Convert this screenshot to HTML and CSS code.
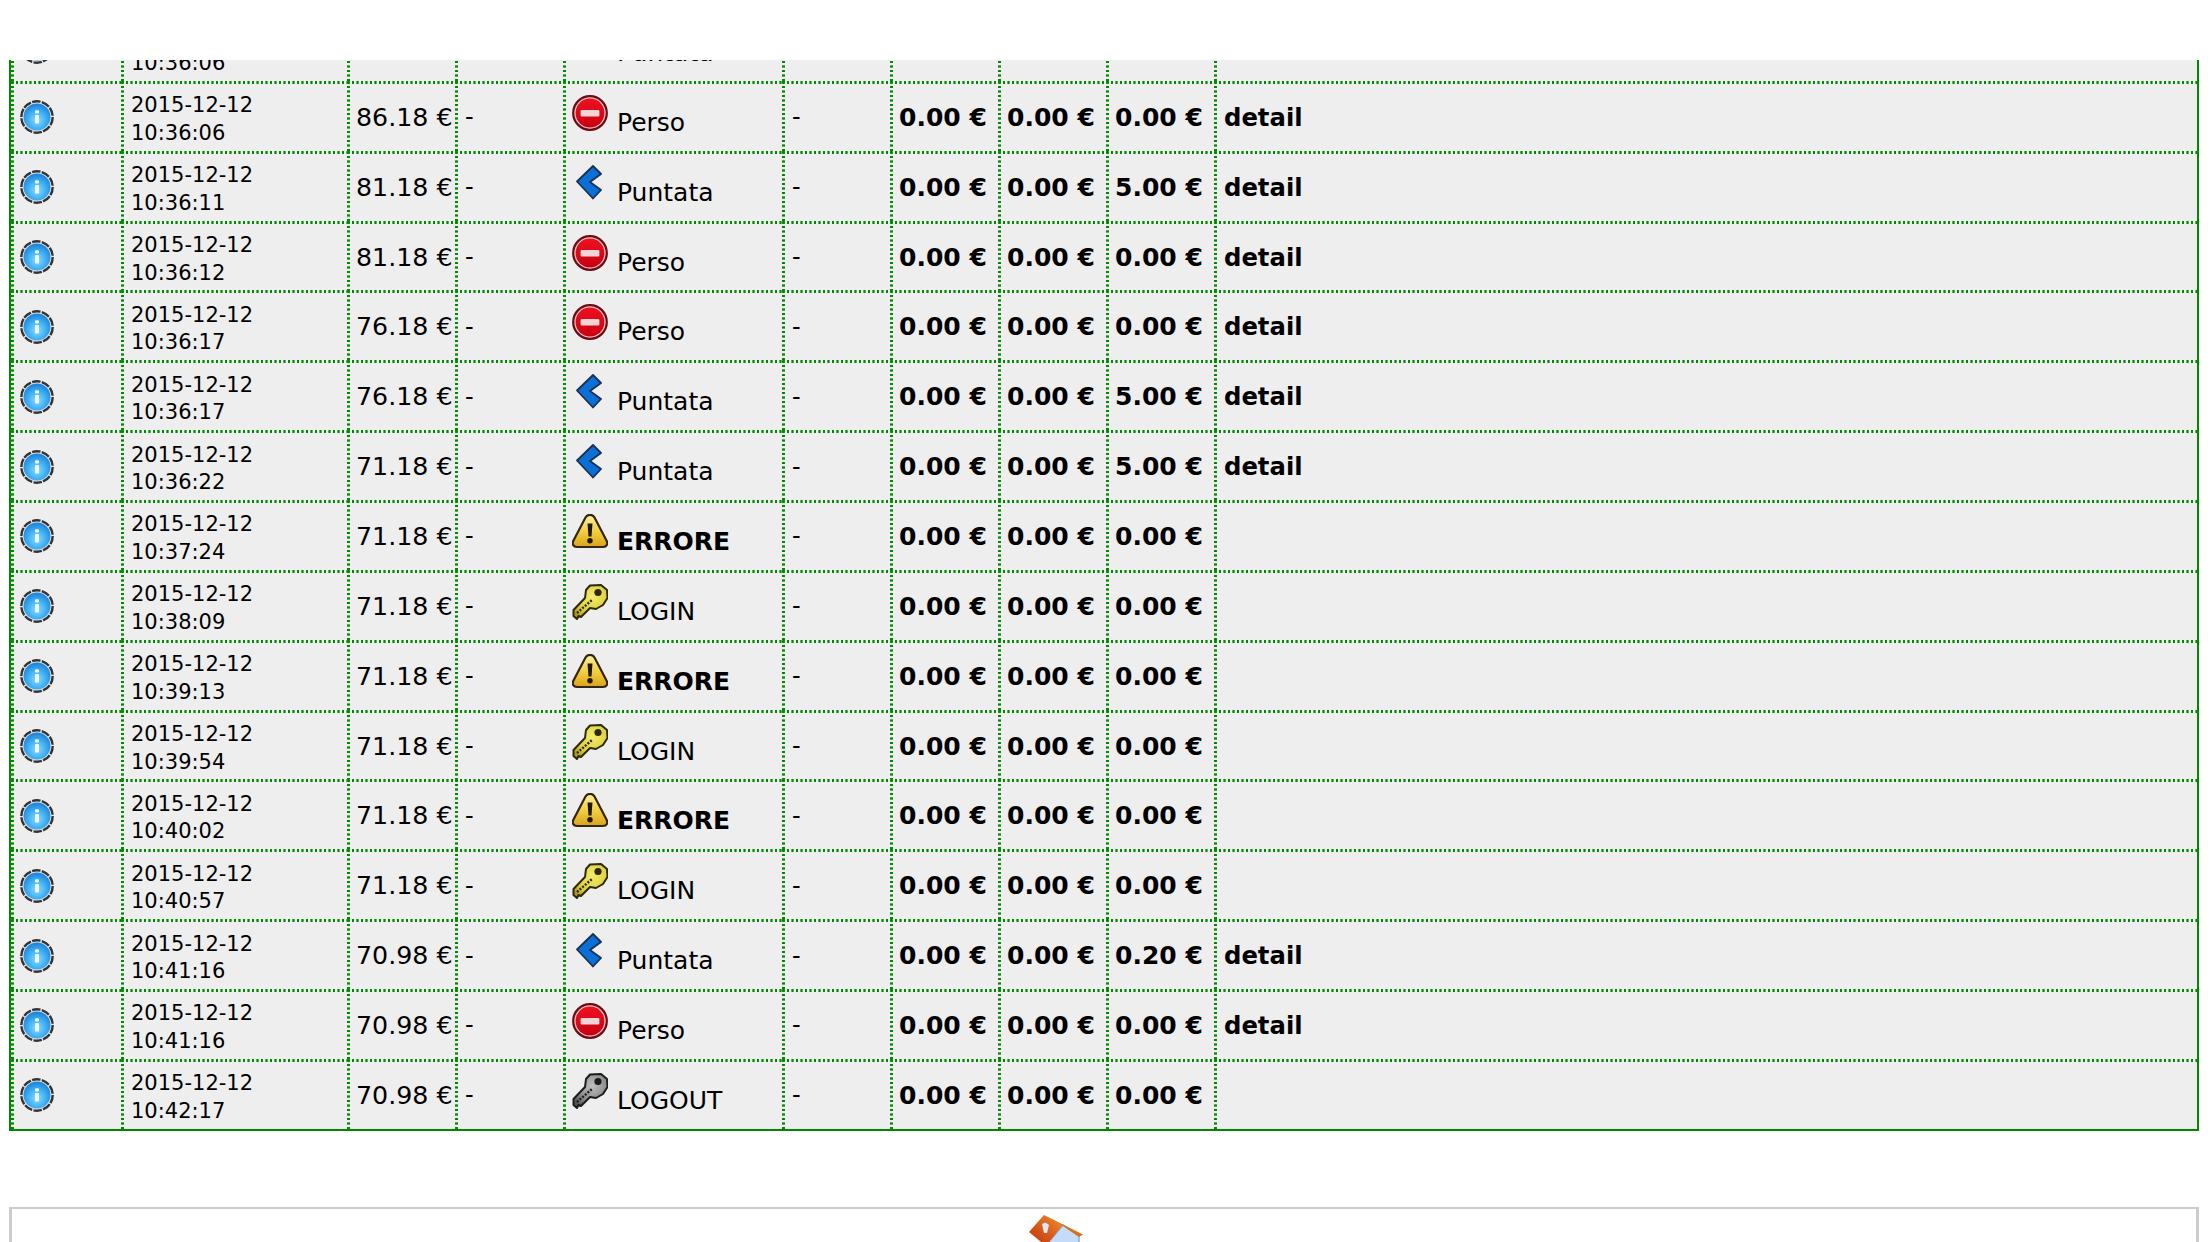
FILE: index.html
```html
<!DOCTYPE html>
<html lang="it">
<head>
<meta charset="utf-8">
<title>Storico</title>
<link rel="stylesheet" href="styles.css">
</head>
<body>
<svg class="sprite" width="0" height="0" aria-hidden="true">
  <defs>
    <radialGradient id="g-info" cx="50%" cy="62%" r="58%">
      <stop offset="0" stop-color="#8edcff"/><stop offset=".55" stop-color="#42b2f4"/><stop offset="1" stop-color="#1f86dc"/>
    </radialGradient>
    <linearGradient id="g-stop" x1="0" y1="0" x2="0" y2="1">
      <stop offset="0" stop-color="#f01020"/><stop offset="1" stop-color="#c80010"/>
    </linearGradient>
    <linearGradient id="g-warn" x1="0" y1="0" x2="0" y2="1">
      <stop offset="0" stop-color="#fdf0a0"/><stop offset=".55" stop-color="#f2cc3c"/><stop offset="1" stop-color="#d8a21c"/>
    </linearGradient>
    <linearGradient id="g-roof" x1="0" y1="1" x2="1" y2="0">
      <stop offset="0" stop-color="#c02c08"/><stop offset="1" stop-color="#f29030"/>
    </linearGradient>
    <radialGradient id="g-key-gold" cx="55%" cy="35%" r="70%">
      <stop offset="0" stop-color="#f4ec6c"/><stop offset=".65" stop-color="#dcd03c"/><stop offset="1" stop-color="#a89818"/>
    </radialGradient>
    <radialGradient id="g-key-grey" cx="55%" cy="35%" r="70%">
      <stop offset="0" stop-color="#c0c0c0"/><stop offset=".65" stop-color="#888"/><stop offset="1" stop-color="#505050"/>
    </radialGradient>
    <symbol id="i-info" viewBox="0 0 34 34">
      <circle cx="17" cy="17" r="15.700" fill="#dfe6ec" stroke="#333" stroke-width="2.400" stroke-dasharray="8.500 1.300"/>
      <circle cx="17" cy="17" r="13.500" fill="url(#g-info)"/>
      <rect x="15" y="10.300" width="4" height="3.200" rx="1.200" fill="#eef8ff"/>
      <rect x="15" y="15" width="4" height="8.500" rx=".8" fill="#eef8ff"/>
    </symbol>
    <symbol id="i-stop" viewBox="0 0 36 36">
      <circle cx="18" cy="18" r="16.800" fill="#ecc4c4" stroke="#6e0a12" stroke-width="2.200"/>
      <circle cx="18" cy="18" r="14.400" fill="url(#g-stop)"/>
      <rect x="8.600" y="15" width="18.800" height="6.400" rx="1" fill="#f4d4d4"/>
    </symbol>
    <symbol id="i-back" viewBox="0 0 36 36">
      <path d="M5 16.500 21 1l8 8-11 8 11 8-8 8.500z" fill="#0a70d8" stroke="#1c3050" stroke-width="1.800" stroke-linejoin="round"/>
    </symbol>
    <symbol id="i-warn" viewBox="0 0 36 36">
      <path d="M13.500 3.500c2-3.500 7-3.500 9 0l12 23c1.800 3.500.3 6.500-3.500 6.500H5c-3.800 0-5.300-3-3.500-6.500z" fill="url(#g-warn)" stroke="#33260c" stroke-width="2.200"/>
      <path d="M15.500 9.500h5l-1 13h-3z" fill="#1e1606"/>
      <circle cx="18" cy="26.800" r="2.700" fill="#1e1606"/>
    </symbol>
    <symbol id="i-key" viewBox="0 0 36 36">
      <path d="M13 14 14 6 18 1.500 29 1l6 5 .5 8-4.500 7-7 4-6-1-9 9-2.500-1L5 35l-3.500-3v-6z" fill="var(--key-fill)" stroke="var(--key-line)" stroke-width="2" stroke-linejoin="round"/>
      <path d="M5 29 20 16" stroke="var(--key-line)" stroke-width="2.400" stroke-dasharray="2 1.500" fill="none"/>
      <circle cx="26" cy="8.500" r="3.600" fill="var(--key-line)"/>
    </symbol>
    <symbol id="i-home" viewBox="0 0 56 52">
      <path d="M17 30 34 10 50 21V52H17z" fill="#c4dcfa" stroke="#8cacdc" stroke-width="1.500"/>
      <path d="M15 0 54 19.500 50 22 34 11z" fill="#d8701c"/>
      <path d="M0 17 15 0 34 10 17 31z" fill="url(#g-roof)"/>
      <path d="M13 9l3.500-1.500L20 10l-2 8h-3z" fill="#dce8f8"/>
    </symbol>
  </defs>
</svg>

<header class="top-bar"></header>

<main class="page">
  <table class="log">
    <colgroup>
      <col class="c-icon"><col class="c-date"><col class="c-num"><col class="c-num">
      <col class="c-label"><col class="c-num"><col class="c-num"><col class="c-num"><col class="c-num"><col>
    </colgroup>
    <tbody>
      <tr>
        <td><svg class="ico-info"><use href="#i-info"/></svg></td><td class="date">2015-12-12<br>10:36:06</td><td class="amt">86.18 €</td><td>-</td>
        <td class="label"><svg class="ico"><use href="#i-back"/></svg> Puntata</td><td>-</td>
        <td class="b">0.00 €</td><td class="b">0.00 €</td><td class="b">5.00 €</td><td class="link">detail</td>
      </tr>
      <tr>
        <td><svg class="ico-info"><use href="#i-info"/></svg></td><td class="date">2015-12-12<br>10:36:06</td><td class="amt">86.18 €</td><td>-</td>
        <td class="label"><svg class="ico"><use href="#i-stop"/></svg> Perso</td><td>-</td>
        <td class="b">0.00 €</td><td class="b">0.00 €</td><td class="b">0.00 €</td><td class="link">detail</td>
      </tr>
      <tr>
        <td><svg class="ico-info"><use href="#i-info"/></svg></td><td class="date">2015-12-12<br>10:36:11</td><td class="amt">81.18 €</td><td>-</td>
        <td class="label"><svg class="ico"><use href="#i-back"/></svg> Puntata</td><td>-</td>
        <td class="b">0.00 €</td><td class="b">0.00 €</td><td class="b">5.00 €</td><td class="link">detail</td>
      </tr>
      <tr>
        <td><svg class="ico-info"><use href="#i-info"/></svg></td><td class="date">2015-12-12<br>10:36:12</td><td class="amt">81.18 €</td><td>-</td>
        <td class="label"><svg class="ico"><use href="#i-stop"/></svg> Perso</td><td>-</td>
        <td class="b">0.00 €</td><td class="b">0.00 €</td><td class="b">0.00 €</td><td class="link">detail</td>
      </tr>
      <tr>
        <td><svg class="ico-info"><use href="#i-info"/></svg></td><td class="date">2015-12-12<br>10:36:17</td><td class="amt">76.18 €</td><td>-</td>
        <td class="label"><svg class="ico"><use href="#i-stop"/></svg> Perso</td><td>-</td>
        <td class="b">0.00 €</td><td class="b">0.00 €</td><td class="b">0.00 €</td><td class="link">detail</td>
      </tr>
      <tr>
        <td><svg class="ico-info"><use href="#i-info"/></svg></td><td class="date">2015-12-12<br>10:36:17</td><td class="amt">76.18 €</td><td>-</td>
        <td class="label"><svg class="ico"><use href="#i-back"/></svg> Puntata</td><td>-</td>
        <td class="b">0.00 €</td><td class="b">0.00 €</td><td class="b">5.00 €</td><td class="link">detail</td>
      </tr>
      <tr>
        <td><svg class="ico-info"><use href="#i-info"/></svg></td><td class="date">2015-12-12<br>10:36:22</td><td class="amt">71.18 €</td><td>-</td>
        <td class="label"><svg class="ico"><use href="#i-back"/></svg> Puntata</td><td>-</td>
        <td class="b">0.00 €</td><td class="b">0.00 €</td><td class="b">5.00 €</td><td class="link">detail</td>
      </tr>
      <tr>
        <td><svg class="ico-info"><use href="#i-info"/></svg></td><td class="date">2015-12-12<br>10:37:24</td><td class="amt">71.18 €</td><td>-</td>
        <td class="label"><svg class="ico"><use href="#i-warn"/></svg> <strong>ERRORE</strong></td><td>-</td>
        <td class="b">0.00 €</td><td class="b">0.00 €</td><td class="b">0.00 €</td><td></td>
      </tr>
      <tr>
        <td><svg class="ico-info"><use href="#i-info"/></svg></td><td class="date">2015-12-12<br>10:38:09</td><td class="amt">71.18 €</td><td>-</td>
        <td class="label"><svg class="ico key-gold"><use href="#i-key"/></svg> LOGIN</td><td>-</td>
        <td class="b">0.00 €</td><td class="b">0.00 €</td><td class="b">0.00 €</td><td></td>
      </tr>
      <tr>
        <td><svg class="ico-info"><use href="#i-info"/></svg></td><td class="date">2015-12-12<br>10:39:13</td><td class="amt">71.18 €</td><td>-</td>
        <td class="label"><svg class="ico"><use href="#i-warn"/></svg> <strong>ERRORE</strong></td><td>-</td>
        <td class="b">0.00 €</td><td class="b">0.00 €</td><td class="b">0.00 €</td><td></td>
      </tr>
      <tr>
        <td><svg class="ico-info"><use href="#i-info"/></svg></td><td class="date">2015-12-12<br>10:39:54</td><td class="amt">71.18 €</td><td>-</td>
        <td class="label"><svg class="ico key-gold"><use href="#i-key"/></svg> LOGIN</td><td>-</td>
        <td class="b">0.00 €</td><td class="b">0.00 €</td><td class="b">0.00 €</td><td></td>
      </tr>
      <tr>
        <td><svg class="ico-info"><use href="#i-info"/></svg></td><td class="date">2015-12-12<br>10:40:02</td><td class="amt">71.18 €</td><td>-</td>
        <td class="label"><svg class="ico"><use href="#i-warn"/></svg> <strong>ERRORE</strong></td><td>-</td>
        <td class="b">0.00 €</td><td class="b">0.00 €</td><td class="b">0.00 €</td><td></td>
      </tr>
      <tr>
        <td><svg class="ico-info"><use href="#i-info"/></svg></td><td class="date">2015-12-12<br>10:40:57</td><td class="amt">71.18 €</td><td>-</td>
        <td class="label"><svg class="ico key-gold"><use href="#i-key"/></svg> LOGIN</td><td>-</td>
        <td class="b">0.00 €</td><td class="b">0.00 €</td><td class="b">0.00 €</td><td></td>
      </tr>
      <tr>
        <td><svg class="ico-info"><use href="#i-info"/></svg></td><td class="date">2015-12-12<br>10:41:16</td><td class="amt">70.98 €</td><td>-</td>
        <td class="label"><svg class="ico"><use href="#i-back"/></svg> Puntata</td><td>-</td>
        <td class="b">0.00 €</td><td class="b">0.00 €</td><td class="b">0.20 €</td><td class="link">detail</td>
      </tr>
      <tr>
        <td><svg class="ico-info"><use href="#i-info"/></svg></td><td class="date">2015-12-12<br>10:41:16</td><td class="amt">70.98 €</td><td>-</td>
        <td class="label"><svg class="ico"><use href="#i-stop"/></svg> Perso</td><td>-</td>
        <td class="b">0.00 €</td><td class="b">0.00 €</td><td class="b">0.00 €</td><td class="link">detail</td>
      </tr>
      <tr>
        <td><svg class="ico-info"><use href="#i-info"/></svg></td><td class="date">2015-12-12<br>10:42:17</td><td class="amt">70.98 €</td><td>-</td>
        <td class="label"><svg class="ico key-grey"><use href="#i-key"/></svg> LOGOUT</td><td>-</td>
        <td class="b">0.00 €</td><td class="b">0.00 €</td><td class="b">0.00 €</td><td></td>
      </tr>
    </tbody>
  </table>

  <section class="footer-box">
    <svg class="ico-home"><use href="#i-home"/></svg>
  </section>
</main>
</body>
</html>
```

FILE: styles.css
```css
html, body {
  margin: 0;
  padding: 0;
  height: 1242px;
  overflow: hidden;
  background: #fff;
}

.sprite {
  position: absolute;
}

.top-bar {
  position: absolute;
  top: 0;
  left: 0;
  right: 0;
  height: 60px;
  background: #fff;
  z-index: 2;
}

.page {
  height: 1233px;
  overflow: hidden;
  padding: 9px 9px 0;
  font-family: "DejaVu Sans", Verdana, sans-serif;
  color: #000;
}

.log {
  width: 2190px;
  table-layout: fixed;
  border-collapse: separate;
  border-spacing: 0;
  border: 2px solid #080;
  background: #eee;
  font-size: 24px;
}

.c-icon { width: 110px; }
.c-date { width: 226px; }
.c-num { width: 108px; }
.c-label { width: 219px; }

/* The grid lines are soft 3px dots every 4.5px: drawn as gradients, since a
   dotted border cannot be thicker than its own dot spacing allows. */
.log td {
  box-sizing: border-box;
  height: 69.87px;
  padding: 3px 0 0 10px;
  background-image:
    repeating-linear-gradient(90deg, transparent 0, #080 .8px, #080 2.200px, transparent 3px, transparent 4.500px),
    repeating-linear-gradient(180deg, transparent 0, #080 .8px, #080 2.200px, transparent 3px, transparent 4.500px);
  background-size: 100% 3px, 3px 100%;
  background-position: 0 0, 0 0;
  background-repeat: no-repeat;
  white-space: nowrap;
  vertical-align: middle;
}

.log td.date {
  padding: 8px 0 0 10px;
  font-size: 21px;
  line-height: 27.5px;
}

.log td.amt {
  padding-left: 9px;
  font-size: 25.3px;
}

.log td.b {
  padding-left: 9px;
  font-weight: bold;
  font-size: 25px;
}

.log td.link {
  font-weight: bold;
  font-size: 24.3px;
}

.log td.label {
  padding: 3px 0 3px 9px;
  font-size: 25px;
}

.ico-info {
  display: block;
  width: 34px;
  height: 34px;
  margin-left: -1px;
  filter: blur(.3px);
}

.ico {
  width: 36px;
  height: 36px;
  margin-right: 1px;
  vertical-align: baseline;
  filter: blur(.3px);
}

.key-gold {
  --key-fill: url(#g-key-gold);
  --key-line: #2e2808;
}

.key-grey {
  --key-fill: url(#g-key-grey);
  --key-line: #1c1c1c;
}

.footer-box {
  margin-top: 76px;
  height: 40px;
  overflow: hidden;
  padding: 6px 0 0 1017px;
  border: solid #ccc;
  border-width: 2px 3px 0;
  background: #fff;
}

.ico-home {
  display: block;
  width: 56px;
  height: 52px;
  filter: blur(.4px);
}
```
